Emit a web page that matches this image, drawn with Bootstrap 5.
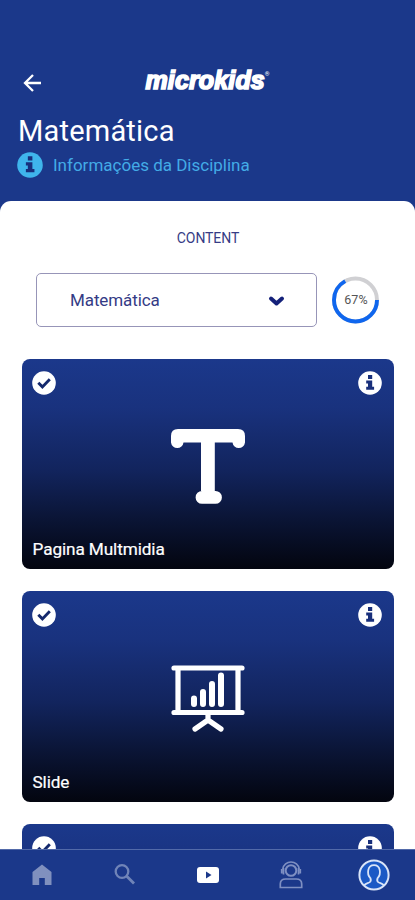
<!DOCTYPE html>
<html lang="pt-BR">
<head>
<meta charset="utf-8">
<meta name="viewport" content="width=device-width, initial-scale=1">
<title>Microkids</title>
<link href="https://cdn.jsdelivr.net/npm/bootstrap@5.3.0/dist/css/bootstrap.min.css" rel="stylesheet">
<style>
:root{--brand:#1b388a;--ink:#363c86}
body{font-family:Roboto,sans-serif;background:var(--brand);line-height:1}
svg{display:block;flex:none}
.screen{height:900px}
.top-area{height:201px;padding:66px 18px 0}
.brand-row{height:34px}
.back-btn{width:30px;margin-top:2px}
.logo-text{font:italic 800 25px/29px "Liberation Sans",sans-serif;letter-spacing:.15px;-webkit-text-stroke:1.7px #fff}
.logo-text sup{font:400 6px/6px Roboto,sans-serif;top:-13px;letter-spacing:0;-webkit-text-stroke:0}
.page-title{font-size:29px;line-height:34px;margin:14px 0 0;font-weight:400;letter-spacing:.2px}
.info-link{color:#43abe6;font-size:17px;line-height:26px;gap:10px;margin-top:4px}
.info-link svg{margin-left:-1px;color:#3fb5ec}
.sheet{border-radius:11px 11px 0 0;padding:29px 21px 0 22px}
.section-label{color:var(--ink);font-size:14px;line-height:17px;letter-spacing:-.1px;height:16px}
.picker{width:281px;height:54px;border:1.5px solid #9795b8;border-radius:5px;color:#343b85;font-size:17px;padding:0 31px 0 33px;letter-spacing:-.1px}
.picker-row{margin:27px 0 31.5px 14px;gap:15px;height:54px}
.ring-box{width:48px;height:48px}
.ring-label{font-size:12.5px;color:#555;letter-spacing:.1px}
.lesson{height:210.5px;border-radius:8px;padding:12px 12px 10px 10px;background:linear-gradient(#1b388b 0%,#19327e 23%,#12245d 53%,#0a1434 77%,#03050f 100%)}
.lesson-title{font-size:17.2px;line-height:20px;letter-spacing:-.1px;padding-left:.5px;-webkit-text-stroke:.2px #fff}
.lesson-art{left:148px;top:69px}
.tabs{height:51px;background:var(--brand);border-top:1px solid #526aa9}
</style>
<script src="https://cdn.jsdelivr.net/npm/bootstrap@5.3.0/dist/js/bootstrap.bundle.min.js"></script>
</head>
<body>
<svg width="0" height="0" class="position-absolute" aria-hidden="true">
  <symbol id="check" viewBox="0 0 24 24"><circle cx="12" cy="12" r="11.800" fill="#fff"/><path d="M6.300 11.800l4.100 4.100 7.400-7.600" fill="none" stroke="#14286c" stroke-width="2.900"/></symbol>
  <symbol id="info" viewBox="0 0 24 24"><circle cx="12" cy="12" r="11.800" fill="currentColor"/><path d="M10 4h4.200v3.900H10zM8.200 9.500h6v6.200h1.900v3H8.200v-3H10v-3.300H8.200z" fill="#182f7b"/></symbol>
</svg>
<div class="screen d-flex flex-column overflow-hidden">
  <header class="top-area text-white flex-shrink-0">
    <div class="brand-row d-flex">
      <a class="back-btn d-block" href="#" aria-label="Voltar"><svg width="30" height="30" viewBox="0 0 30 30" fill="none" stroke="#fff" stroke-width="2.300"><path d="M23 15H8M15 7l-8 8 8 8"/></svg></a>
      <div class="logo-text flex-fill text-center">microkids<sup>®</sup></div>
      <span class="back-btn"></span>
    </div>
    <h1 class="page-title">Matemática</h1>
    <div class="info-link d-flex align-items-center"><svg width="26" height="26"><use href="#info"/></svg><span>Informações da Disciplina</span></div>
  </header>
  <main class="sheet bg-white flex-fill overflow-hidden">
    <div class="section-label text-center">CONTENT</div>
    <div class="picker-row d-flex align-items-center">
      <div class="picker d-flex align-items-center justify-content-between">Matemática
        <svg width="18" height="14" viewBox="0 0 18 14" fill="none" stroke="#14217a" stroke-width="4" stroke-linecap="round" stroke-linejoin="round"><path d="M4 5.500L9.500 10.500 15 5.500"/></svg></div>
      <div class="ring-box position-relative">
        <svg width="48" height="48" fill="none" stroke-width="3.900"><circle cx="23.500" cy="24" r="21.500" stroke="#d0d0d3"/><circle cx="23.500" cy="24" r="21.500" stroke="#0f66ee" pathLength="100" stroke-dasharray="67 33"/></svg>
        <span class="ring-label position-absolute top-50 start-50 translate-middle">67%</span>
      </div>
    </div>
    <div class="d-flex flex-column" style="gap:22px">
      <article class="lesson text-white position-relative d-flex flex-column justify-content-between flex-shrink-0">
        <div class="d-flex justify-content-between"><svg width="24" height="24"><use href="#check"/></svg><svg width="24" height="24"><use href="#info"/></svg></div>
        <svg class="lesson-art position-absolute" width="76" height="78" fill="#fff"><path d="M8 1H68Q75 1 75 8V14.500A6.300 6.300 0 0 1 62.500 14.500H44.800V63H45.500A6.300 6.300 0 0 1 45.500 75.800H32A6.300 6.300 0 0 1 32 63H31V14.500H13.500A6.300 6.300 0 0 1 1 14.500V8Q1 1 8 1Z"/></svg>
        <div class="lesson-title">Pagina Multmidia</div>
      </article>
      <article class="lesson text-white position-relative d-flex flex-column justify-content-between flex-shrink-0">
        <div class="d-flex justify-content-between"><svg width="24" height="24"><use href="#check"/></svg><svg width="24" height="24"><use href="#info"/></svg></div>
        <svg class="lesson-art position-absolute" width="76" height="78" fill="none" stroke="#fff" stroke-width="5.200" stroke-linecap="round"><path d="M4 8H72M4 52.500H72M8 9V51M68 9V51M38 53V59.500M38 60L25 69M38 60L51 69"/><path d="M24 38.500V44M33 32V44M42 24V44M51 15.500V44" stroke-width="6"/></svg>
        <div class="lesson-title">Slide</div>
      </article>
      <article class="lesson text-white flex-shrink-0">
        <div class="d-flex justify-content-between"><svg width="24" height="24"><use href="#check"/></svg><svg width="24" height="24"><use href="#info"/></svg></div>
      </article>
    </div>
  </main>
  <nav class="tabs row g-0 flex-shrink-0 align-items-center" aria-label="Principal">
    <a class="col d-flex justify-content-center" href="#" aria-label="Início"><svg width="24" height="24" fill="#8090be"><path d="M2.500 9L12 1.500 21.500 9v13H14.800V15H9.200V22H2.500z"/></svg></a>
    <a class="col d-flex justify-content-center" href="#" aria-label="Buscar"><svg width="24" height="24" fill="none" stroke="#7084b8" stroke-width="2.300"><circle cx="9" cy="8.500" r="6.300"/><path d="M13.500 13l7.500 7.500" stroke-width="2.800"/></svg></a>
    <a class="col d-flex justify-content-center" href="#" aria-label="Vídeos"><svg width="24" height="24"><rect x="1" y="4" width="22" height="16" rx="3" fill="#fff"/><path d="M10 8.500l5.500 3.500-5.500 3.500z" fill="#1b388a"/></svg></a>
    <a class="col d-flex justify-content-center" href="#" aria-label="Suporte"><svg width="24" height="30" fill="none" stroke="#7e8fc2" stroke-width="1.700"><circle cx="12" cy="10.500" r="5.300" stroke-width="2"/><path d="M3.800 9a8.300 8.300 0 0 1 16.400 0M2.700 9v4.500M4.500 8v6.500M21.300 9v4.500M19.500 8v6.500M1.300 27.500v-3.500q0-5 5.500-5h10.400q5.500 0 5.500 5v3.500z"/></svg></a>
    <a class="col d-flex justify-content-center" href="#" aria-label="Perfil"><svg width="32" height="32" fill="none" stroke="#d9e4f8"><circle cx="16" cy="16" r="14.600" fill="#1b59c5" stroke-width="2"/><path d="M6 26.500c1.500-2 4.200-2.200 5.800-3.400 1.200-1 1.200-2.600.5-4.100-3.700-4-3-12.800 3.700-12.800s7.400 8.800 3.700 12.800c-.7 1.500-.7 3.100.5 4.100 1.600 1.200 4.300 1.400 5.800 3.400" stroke-width="1.800"/></svg></a>
  </nav>
</div>
</body>
</html>
